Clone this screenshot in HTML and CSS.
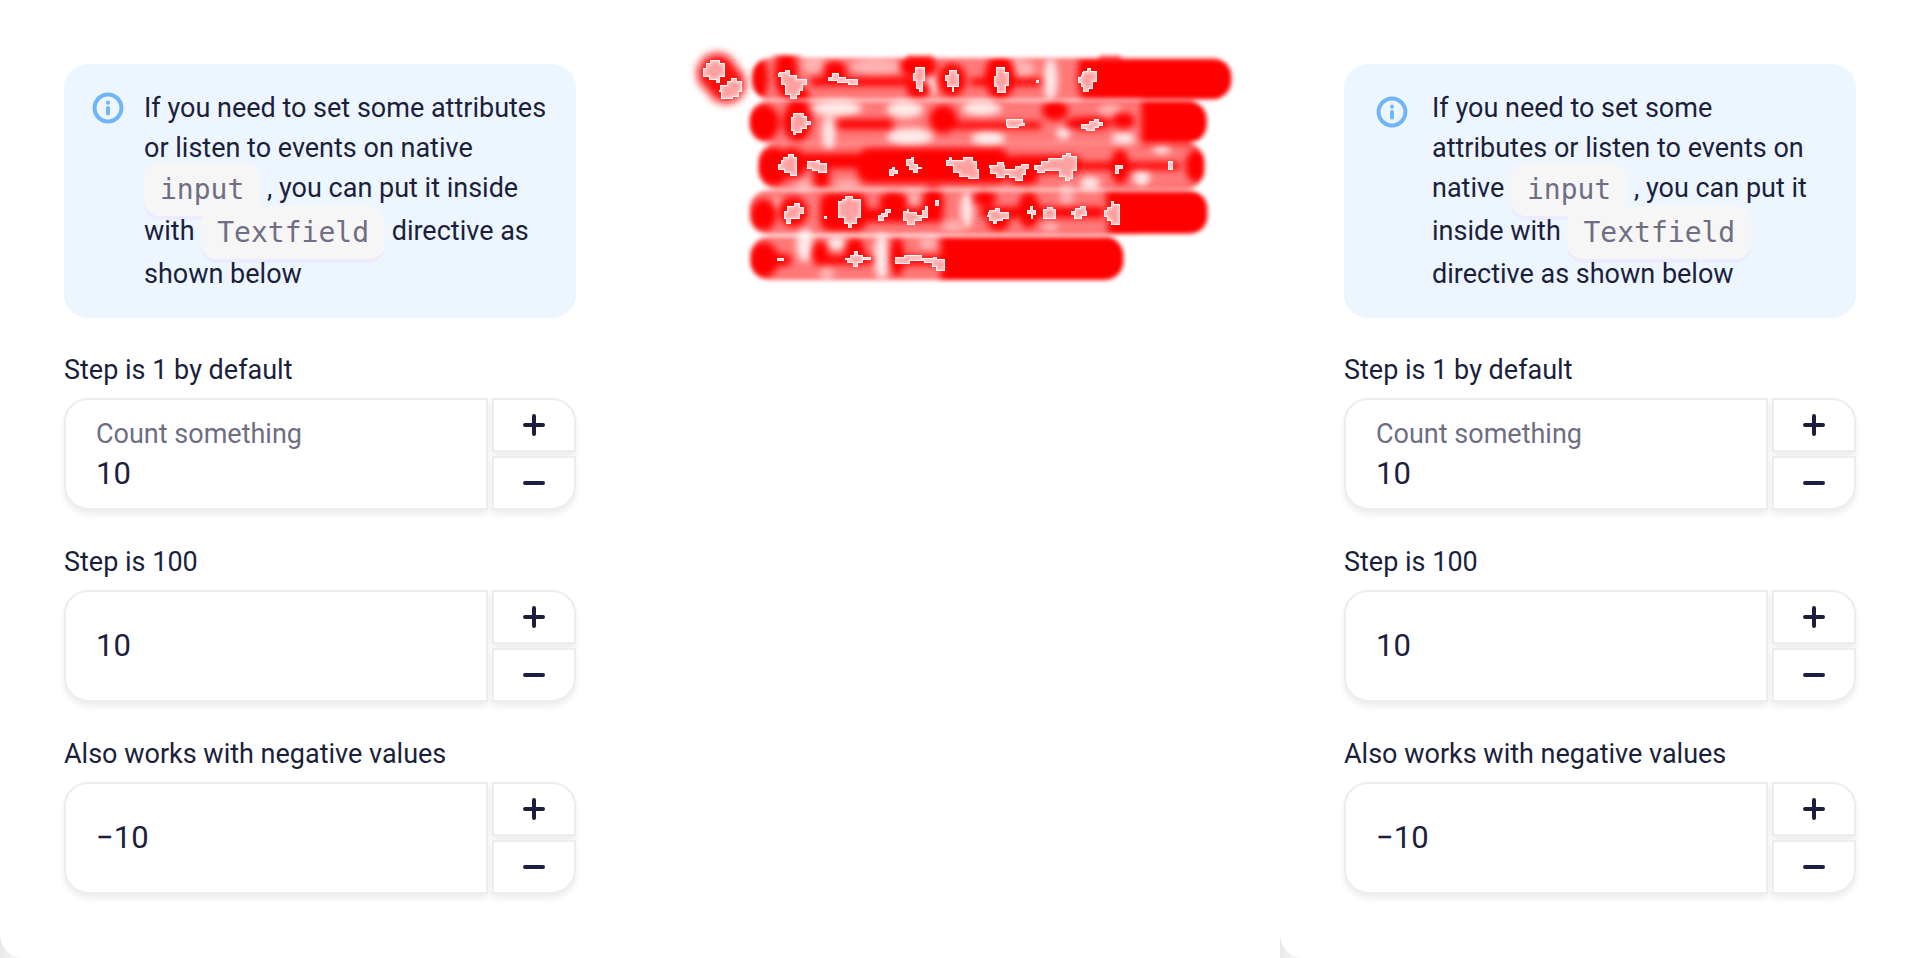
FILE: index.html
```html
<!DOCTYPE html>
<html lang="en">
<head>
<meta charset="utf-8">
<title>Input count</title>
<link rel="stylesheet" href="styles.css">
</head>
<body>
<main class="compare">
  <div class="column">
    <section class="sheet">
      <div class="note">
        <svg class="note-icon" viewBox="0 0 40 40" aria-hidden="true"><circle cx="20" cy="20" r="13.4"/><path d="M20 20v5.4"/><path d="M20 14.6v.1"/></svg>
        <p class="note-text">If you need to set some attributes<br>or listen to events on native<br><code>input</code> , you can put it inside<br>with <code>Textfield</code> directive as<br>shown below</p>
      </div>
      <div class="field">
        <label class="label" for="a1">Step is 1 by default</label>
        <div class="count">
          <div class="box"><label class="hint" for="a1">Count something</label><input id="a1" class="value" type="text" value="10"></div>
          <div class="steps">
            <button class="step" type="button" aria-label="Increase"><svg viewBox="0 0 32 32"><path d="M16 7v18M7 16h18"/></svg></button>
            <button class="step" type="button" aria-label="Decrease"><svg viewBox="0 0 32 32"><path d="M7 16h18"/></svg></button>
          </div>
        </div>
      </div>
      <div class="field">
        <label class="label" for="a2">Step is 100</label>
        <div class="count">
          <div class="box"><input id="a2" class="value" type="text" value="10"></div>
          <div class="steps">
            <button class="step" type="button" aria-label="Increase"><svg viewBox="0 0 32 32"><path d="M16 7v18M7 16h18"/></svg></button>
            <button class="step" type="button" aria-label="Decrease"><svg viewBox="0 0 32 32"><path d="M7 16h18"/></svg></button>
          </div>
        </div>
      </div>
      <div class="field">
        <label class="label" for="a3">Also works with negative values</label>
        <div class="count">
          <div class="box"><input id="a3" class="value" type="text" value="−10"></div>
          <div class="steps">
            <button class="step" type="button" aria-label="Increase"><svg viewBox="0 0 32 32"><path d="M16 7v18M7 16h18"/></svg></button>
            <button class="step" type="button" aria-label="Decrease"><svg viewBox="0 0 32 32"><path d="M7 16h18"/></svg></button>
          </div>
        </div>
      </div>
    </section>
  </div>

  <div class="heat">
    <svg class="heatmap" viewBox="0 0 1740 800" role="img" aria-label="Difference map">
      <defs>
        <filter id="edge" x="-5%" y="-10%" width="110%" height="120%"><feGaussianBlur stdDeviation="7"/></filter>
        <filter id="halo" x="-30%" y="-30%" width="160%" height="160%"><feGaussianBlur stdDeviation="12"/></filter>
        <filter id="soft" x="-10%" y="-10%" width="120%" height="120%"><feGaussianBlur stdDeviation="11"/></filter>
        <filter id="inner"><feMorphology operator="erode" radius="3"/></filter>
        <filter id="core"><feMorphology operator="erode" radius="5"/><feGaussianBlur stdDeviation="5"/></filter>
        <mask id="bands" maskUnits="userSpaceOnUse" x="0" y="0" width="1740" height="800">
          <g fill="#fff" filter="url(#edge)">
            <rect x="244" y="84" width="1440" height="124" rx="56"/><rect x="300" y="76" width="100" height="40" rx="18"/><rect x="700" y="76" width="100" height="40" rx="18"/><rect x="1280" y="76" width="80" height="40" rx="18"/>
            <rect x="238" y="214" width="1372" height="124" rx="54"/><rect x="264" y="340" width="1340" height="136" rx="56"/>
            <rect x="238" y="482" width="1374" height="130" rx="54"/><rect x="240" y="620" width="1120" height="130" rx="56"/>
          </g>
        </mask>
      </defs>
      <g filter="url(#halo)">
        <g fill="#ff1010"><circle cx="142" cy="130" r="60"/><circle cx="168" cy="162" r="58"/></g>
      </g>
      <g mask="url(#bands)">
        <rect x="225" y="65" width="1480" height="700" fill="#ff7878"/>
        <g filter="url(#soft)" fill="#ffeaea">
          <ellipse cx="500" cy="235" rx="76" ry="24"/><ellipse cx="476" cy="310" rx="20" ry="50"/><ellipse cx="705" cy="238" rx="55" ry="26"/><ellipse cx="720" cy="320" rx="70" ry="26"/>
          <ellipse cx="935" cy="235" rx="60" ry="22"/><ellipse cx="955" cy="325" rx="50" ry="24"/><ellipse cx="1142" cy="150" rx="20" ry="68"/><ellipse cx="785" cy="165" rx="16" ry="30"/>
          <ellipse cx="1475" cy="355" rx="28" ry="16"/><ellipse cx="405" cy="645" rx="26" ry="50"/><ellipse cx="635" cy="680" rx="22" ry="70"/><ellipse cx="890" cy="540" rx="18" ry="55"/>
          <ellipse cx="500" cy="640" rx="30" ry="20"/><ellipse cx="1260" cy="460" rx="30" ry="20"/><ellipse cx="1360" cy="325" rx="36" ry="18"/><ellipse cx="1415" cy="440" rx="25" ry="30"/><ellipse cx="1180" cy="310" rx="22" ry="18"/>
        </g>
        <g filter="url(#soft)" fill="#ffb2b2">
          <ellipse cx="620" cy="110" rx="80" ry="26"/><ellipse cx="430" cy="105" rx="35" ry="25"/><ellipse cx="1040" cy="120" rx="55" ry="35"/><ellipse cx="325" cy="535" rx="22" ry="30"/>
          <ellipse cx="400" cy="465" rx="28" ry="18"/><ellipse cx="530" cy="465" rx="40" ry="14"/><ellipse cx="730" cy="505" rx="22" ry="22"/><ellipse cx="1190" cy="500" rx="20" ry="40"/><ellipse cx="1140" cy="590" rx="25" ry="18"/><ellipse cx="850" cy="590" rx="35" ry="20"/><ellipse cx="1320" cy="240" rx="35" ry="20"/><ellipse cx="470" cy="730" rx="22" ry="25"/><ellipse cx="775" cy="640" rx="28" ry="20"/>
        </g>
        <g filter="url(#soft)" fill="#ff0000">
          <path d="M1226 84h500v126h-490l-14-50z"/><rect x="1414" y="210" width="240" height="134"/><path d="M1306 480h350v140h-340z"/><rect x="812" y="618" width="590" height="150"/>
          <ellipse cx="268" cy="145" rx="26" ry="64"/><ellipse cx="348" cy="130" rx="34" ry="76"/><ellipse cx="385" cy="200" rx="32" ry="34"/><ellipse cx="495" cy="125" rx="35" ry="32"/><rect x="420" y="142" width="320" height="26" rx="13"/><rect x="690" y="78" width="110" height="60" rx="30"/><ellipse cx="745" cy="180" rx="35" ry="26"/><ellipse cx="846" cy="150" rx="42" ry="50"/><ellipse cx="990" cy="140" rx="46" ry="70"/><rect x="900" y="144" width="215" height="24" rx="12"/>
          <ellipse cx="280" cy="278" rx="48" ry="56"/><ellipse cx="382" cy="275" rx="44" ry="60"/><rect x="500" y="268" width="170" height="30" rx="15"/><ellipse cx="820" cy="268" rx="42" ry="42"/><rect x="830" y="275" width="285" height="22" rx="11"/><ellipse cx="1155" cy="242" rx="40" ry="30"/><ellipse cx="1255" cy="280" rx="70" ry="20"/><ellipse cx="1360" cy="272" rx="35" ry="24"/>
          <ellipse cx="310" cy="410" rx="50" ry="58"/><ellipse cx="365" cy="400" rx="46" ry="46"/><rect x="390" y="370" width="190" height="46" rx="20"/><rect x="560" y="354" width="460" height="106" rx="40"/><ellipse cx="455" cy="440" rx="26" ry="34"/><rect x="1010" y="376" width="225" height="56" rx="26"/><ellipse cx="1060" cy="445" rx="46" ry="20"/><rect x="1230" y="396" width="300" height="24" rx="12"/><ellipse cx="1580" cy="408" rx="34" ry="50"/><ellipse cx="1350" cy="410" rx="28" ry="52"/>
          <ellipse cx="280" cy="555" rx="40" ry="48"/><ellipse cx="370" cy="545" rx="44" ry="46"/><rect x="450" y="488" width="140" height="115" rx="30"/><rect x="580" y="535" width="240" height="42" rx="20"/><ellipse cx="670" cy="515" rx="42" ry="30"/><ellipse cx="790" cy="520" rx="32" ry="52"/><ellipse cx="945" cy="505" rx="35" ry="24"/><rect x="930" y="530" width="375" height="34" rx="16"/><ellipse cx="985" cy="575" rx="34" ry="28"/><ellipse cx="1076" cy="540" rx="32" ry="55"/>
          <ellipse cx="280" cy="690" rx="46" ry="54"/><rect x="275" y="672" width="90" height="36" rx="18"/><ellipse cx="450" cy="670" rx="24" ry="38"/><rect x="455" y="676" width="155" height="28" rx="14"/><ellipse cx="555" cy="665" rx="30" ry="42"/><ellipse cx="682" cy="680" rx="22" ry="60"/><rect x="680" y="676" width="160" height="30" rx="15"/>
        </g>
      </g>
      <g id="peaks" shape-rendering="crispEdges">
        <path d="M120 90h30v10h16v40h-16v18h-12v-8h-22v-10h-16v-26h8v-16h12z"/><path d="M150 165h20v-12h12v-8h18v8h16v34h-10v14h-16v6h-36v-22h-6z"/>
        <path d="M326 126h18v-6h16v16h20v12h30v18h-10v16h-10v14h-10v10h-20v-10h-14v-30h-12v-26h-10z"/>
        <path d="M474 140h12v-10h20v10h22v8h36v18h-30v-6h-34v-6h-26z"/><path d="M736 112h30v42h-8v32h-12v-10h-8v-24h-10v-22h8z"/><path d="M836 120h26v12h5v40h-14v14h-8v-14h-14v-18h-6v-20h11z"/>
        <path d="M978 112h28v14h10v42h-8v20h-26v-16h-10v-34h6z"/><path d="M1098 150h10v8h-10z"/><path d="M1240 122h12v-8h12v8h16v34h-10v20h-14v10h-18v-14h-6v-12h-8v-20h8z"/>
        <path d="M370 248h32v10h10v16h10v10h-10v12h-16v12h-18v6h-8v-10h-8v-42h8z"/><path d="M1008 268h50v10h8v10h-20v6h-36z"/><path d="M1232 282h24v-8h16v-6h16v8h12v12h-14v6h-12v10h-26v-8h-16z"/>
        <path d="M340 380h14v-8h18v10h9v56h-22v-9h-18v-10h-16v-16h8v-12h7z"/><path d="M411 394h28v-4h12v10h20v30h-26v-6h-20v-8h-14z"/><path d="M656 418h10v-8h10v10h8v12h-12v7h-16z"/><path d="M708 388h14v-6h10v20h12v10h12v6h-12v12h-16v-10h-12v-12h-8z"/>
        <path d="M828 390h10v-8h8v8h34v-8h29v10h12v24h6v32h-34v-8h-25v-12h-18v-20h-22z"/>
        <path d="M958 406h22v-10h22v10h4v10h28v-8h18v-6h26v14h-10v18h-10v20h-22v-10h-18v-8h-14v8h-26v-12h-18z"/><path d="M1092 404h22v-12h20v-8h42v-10h12v-6h14v10h18v46h-10v24h-10v6h-16v-12h-18v-20h-40v6h-24v-8h-10z"/><path d="M1336 406h24v10h-12v16h-14z"/><path d="M1494 394h16v26h-16z"/>
        <path d="M352 528h20v-8h18v10h12v22h-12v16h-28v14h-14v-14h-5v-24h9z"/><path d="M462 558h8v8h-8z"/><path d="M515 506h10v-8h24v10h24v55h-12v20h-14v12h-12v-12h-14v-20h-16v-50h10z"/><path d="M634 548h10v-10h18v10h-8v12h-12v12h-18v-18h10z"/><path d="M698 544h12v-8h8v10h22v10h16v-16h8v-12h9v36h-16v10h-22v12h-24v-12h-13z"/><path d="M796 511h10v16h-10z"/>
        <path d="M958 540h18v-6h14v12h26v20h-16v8h-18v8h-14v-10h-12v-12h-6z"/><path d="M1070 540h10v-12h8v12h10v14h-8v12h-8v-14h-12z"/><path d="M1120 538h10v-8h18v8h10v28h-38z"/><path d="M1202 544h14v-10h14v-6h18v14h3v16h-16v8h-24v-12h-9z"/><path d="M1312 532h10v-20h10v10h18v62h-28v-10h-10v-14h-10v-20h10z"/>
        <path d="M322 684h20v8h-20z"/><path d="M524 684h16v-10h12v-10h12v10h14v8h24v8h-24v8h-14v12h-14v-12h-18v-8h-8z"/><path d="M676 682h26v-6h54v8h32v-4h12v6h24v36h-26v-12h-12v-12h-24v-4h-42v8h-44z"/>
      </g>
      <use class="peak-inner" href="#peaks"/>
      <use class="peak-core" href="#peaks"/>
    </svg>
  </div>

  <div class="column">
    <section class="sheet">
      <div class="note note-wide">
        <svg class="note-icon" viewBox="0 0 40 40" aria-hidden="true"><circle cx="20" cy="20" r="13.4"/><path d="M20 20v5.4"/><path d="M20 14.6v.1"/></svg>
        <p class="note-text">If you need to set some<br>attributes or listen to events on<br>native <code>input</code> , you can put it<br>inside with <code>Textfield</code><br>directive as shown below</p>
      </div>
      <div class="field">
        <label class="label" for="b1">Step is 1 by default</label>
        <div class="count">
          <div class="box"><label class="hint" for="b1">Count something</label><input id="b1" class="value" type="text" value="10"></div>
          <div class="steps">
            <button class="step" type="button" aria-label="Increase"><svg viewBox="0 0 32 32"><path d="M16 7v18M7 16h18"/></svg></button>
            <button class="step" type="button" aria-label="Decrease"><svg viewBox="0 0 32 32"><path d="M7 16h18"/></svg></button>
          </div>
        </div>
      </div>
      <div class="field">
        <label class="label" for="b2">Step is 100</label>
        <div class="count">
          <div class="box"><input id="b2" class="value" type="text" value="10"></div>
          <div class="steps">
            <button class="step" type="button" aria-label="Increase"><svg viewBox="0 0 32 32"><path d="M16 7v18M7 16h18"/></svg></button>
            <button class="step" type="button" aria-label="Decrease"><svg viewBox="0 0 32 32"><path d="M7 16h18"/></svg></button>
          </div>
        </div>
      </div>
      <div class="field">
        <label class="label" for="b3">Also works with negative values</label>
        <div class="count">
          <div class="box"><input id="b3" class="value" type="text" value="−10"></div>
          <div class="steps">
            <button class="step" type="button" aria-label="Increase"><svg viewBox="0 0 32 32"><path d="M16 7v18M7 16h18"/></svg></button>
            <button class="step" type="button" aria-label="Decrease"><svg viewBox="0 0 32 32"><path d="M7 16h18"/></svg></button>
          </div>
        </div>
      </div>
    </section>
  </div>
</main>
</body>
</html>
```

FILE: styles.css
```css
* { box-sizing: border-box; }
body { margin: 0; background: #fff; color: #1b1f3b; font: 27px/40px Roboto, "Liberation Sans", sans-serif; }
.compare { display: grid; grid-template-columns: repeat(3, minmax(0, 1fr)); min-height: 100vh; }
.column { display: grid; background: linear-gradient(90deg, #e8e8e8, #fff 24px); }
.sheet { display: flex; flex-direction: column; gap: 32px; padding: 64px; background: #fff; border-bottom-left-radius: 24px; }
.note { display: flex; align-items: flex-start; gap: 16px; padding: 24px 16px 24px 24px; background: #edf5ff; border-radius: 24px; }
.note-icon { flex: none; width: 40px; height: 40px; fill: none; stroke: #70b6f6; stroke-width: 4; stroke-linecap: round; }
.note-wide .note-icon { margin: 4px; }
.note-text { margin: 0; white-space: nowrap; }
code { padding: 10px 16px; border-radius: 16px; background: #f6f6f6; box-shadow: 0 4px 0 #ecebff; color: #6e6e85; font: 28px/43px "DejaVu Sans Mono", monospace; vertical-align: -2px; }
.field { display: flex; flex-direction: column; gap: 8px; }
.count { display: flex; gap: 4px; height: 112px; }
.box { flex: 1; min-width: 0; display: flex; flex-direction: column; justify-content: center; padding: 0 30px; border: 2px solid #ededed; border-radius: 24px 0 0 24px; box-shadow: 0 4px 6px rgba(0, 0, 0, .08); background: #fff; }
.hint { color: #6e6e85; line-height: 40px; }
.value { width: 100%; height: 40px; padding: 0; border: 0; outline: 0; background: transparent; color: inherit; font: 31px/40px Roboto, "Liberation Sans", sans-serif; }
.steps { display: flex; flex-direction: column; gap: 4px; width: 84px; }
.step { flex: 1; display: grid; place-items: center; padding: 0; border: 2px solid #ededed; background: #fff; box-shadow: 0 4px 6px rgba(0, 0, 0, .08); }
.step:first-child { border-top-right-radius: 24px; }
.step:last-child { border-bottom-right-radius: 24px; }
.step svg { width: 32px; height: 32px; fill: none; stroke: #1b1f3b; stroke-width: 4; stroke-linecap: round; }
.heat { padding: 30px; }
.heatmap { display: block; width: 100%; height: auto; }
#peaks { fill: inherit; }
.heatmap { fill: #fff; }
.peak-inner { fill: #ffd0d0; filter: url(#inner); }
.peak-core { fill: #ffa0a0; filter: url(#core); }
```
